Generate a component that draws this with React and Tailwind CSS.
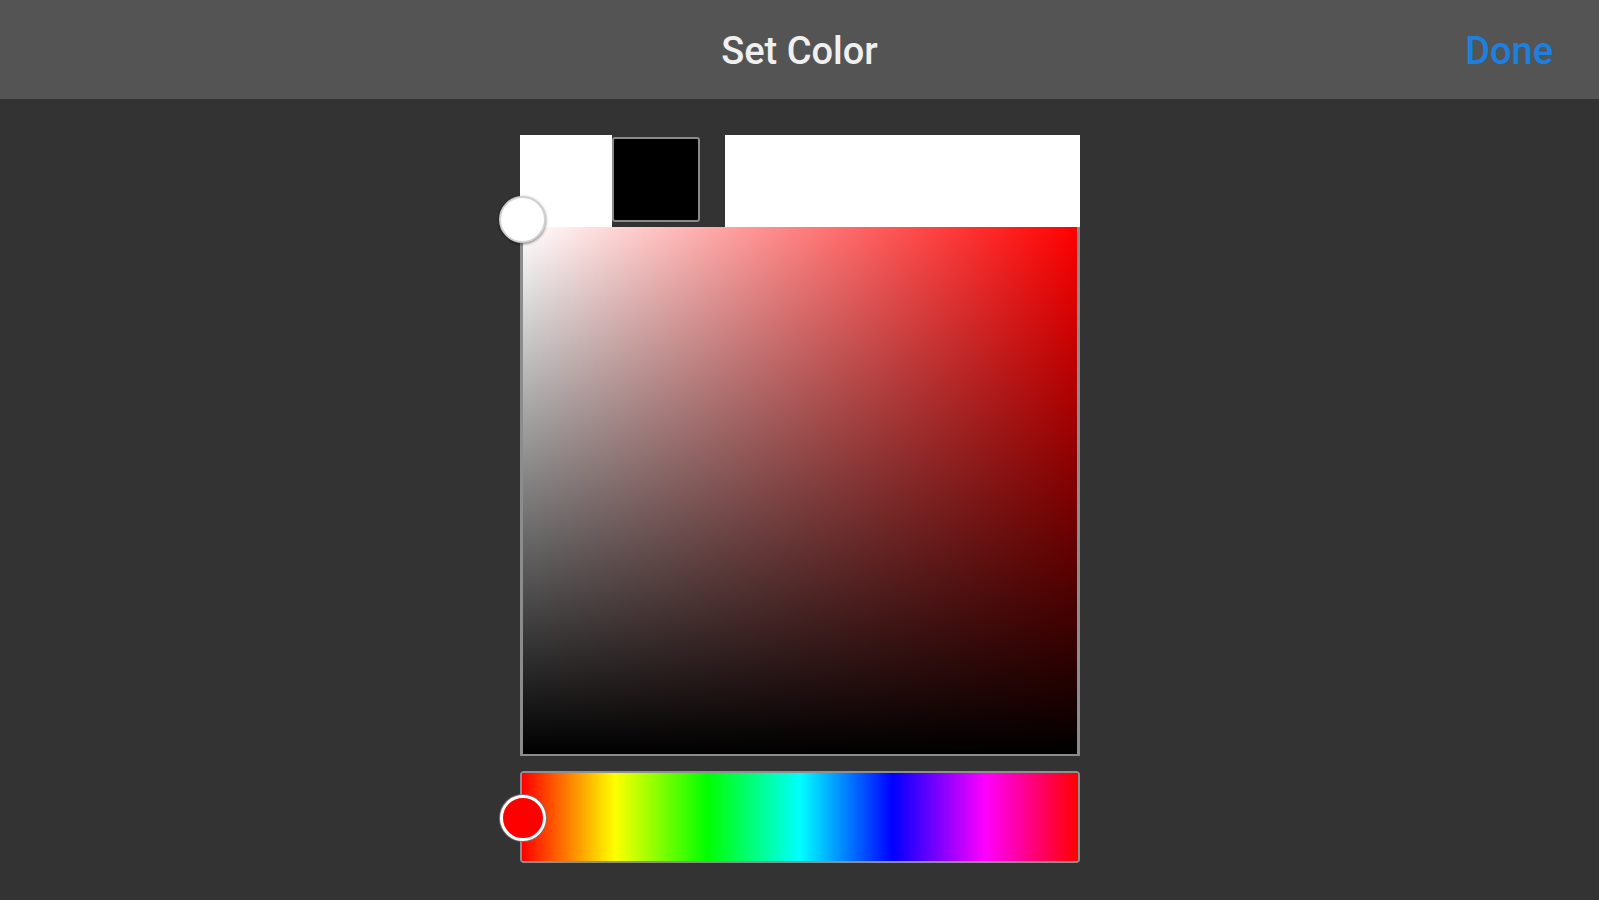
import { useState } from 'react';

function SatValPicker({ hue }) {
    return (
        <div className="relative h-[529px] border-x-[3px] border-b-[2px] border-[#8c8c8c]">
            <div
                className="absolute inset-0"
                style={{ background: `linear-gradient(to top, #000, rgba(0,0,0,0)), linear-gradient(to right, #fff, hsl(${hue}, 100%, 50%))` }}
            />
            {/* thumb sits at the white corner */}
            <div className="absolute left-[-24px] top-[-31px] h-[47px] w-[47px] rounded-full border-2 border-[#d0d0d0] bg-white shadow-[0_1px_3px_rgba(0,0,0,0.5)]" />
        </div>
    );
}

function HueBar() {
    return (
        <div className="relative h-[92px] rounded-[4px] border-2 border-[#8f8f8f]">
            <div className="absolute inset-0 rounded-[2px] bg-[linear-gradient(to_right,#ff0000_0%,#ffff00_16.67%,#00ff00_33.33%,#00ffff_50%,#0000ff_66.67%,#ff00ff_83.33%,#ff0000_100%)]" />
            <div className="absolute left-[-22px] top-[22px] h-[46px] w-[46px] rounded-full border-[3px] border-white bg-[#ff0000] shadow-[0_0_0_1px_rgba(120,120,120,0.9)]" />
        </div>
    );
}

export default function App() {
    const [hue] = useState(0);

    return (
        <div className="flex h-[900px] w-full flex-col bg-[#333333] font-['Roboto','Liberation_Sans',Arial,sans-serif]">
            <div className="relative flex h-[99px] shrink-0 items-center justify-center bg-[#545454]">
                <h1 className="pt-[4px] text-[38px] font-medium text-[#f0f0f0]">Set Color</h1>
                <div className="absolute inset-y-0 right-[46px] flex items-center pt-[4px]">
                    <button type="button" className="text-[38px] font-medium text-[#1d7fe0]">
                        Done
                    </button>
                </div>
            </div>

            <div className="mx-auto mt-[36px] flex w-[560px] flex-col">
                <div className="flex h-[92px]">
                    <div className="w-[92px] bg-white" />
                    <div className="mt-[2px] mb-[5px] w-[88px] rounded-[3px] border-2 border-[#8a8a8a] bg-black" />
                    <div className="w-[25px]" />
                    <div className="flex-1 bg-white" />
                </div>
                <SatValPicker hue={hue} />
                <div className="mt-[15px]">
                    <HueBar />
                </div>
            </div>
        </div>
    );
}
